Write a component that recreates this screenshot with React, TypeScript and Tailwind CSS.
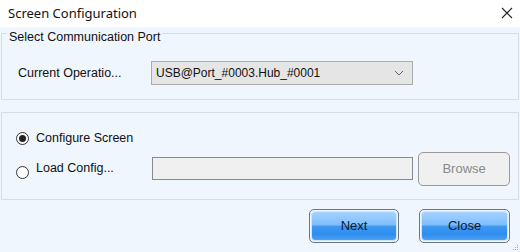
import React from "react";

function Radio({ checked }: { checked: boolean }) {
  return (
    <span className="flex h-[13px] w-[13px] items-center justify-center rounded-full border border-[#333] bg-white">
      {checked && <span className="h-[7px] w-[7px] rounded-full bg-[#222]" />}
    </span>
  );
}

function BlueButton({ label, w }: { label: string; w: string }) {
  return (
    <button className={`h-[34px] ${w} rounded-[5px] border border-[#6e7780] p-[1px]`}>
      <span className="flex h-full w-full items-center justify-center rounded-[4px] border border-[#cfe6ff] bg-[linear-gradient(to_bottom,#a6d3ff_0%,#7fbefc_45%,#3d97f2_52%,#2f8eef_80%,#4aa2f4_100%)] text-[13px] text-[#0a1a2a]">
        {label}
      </span>
    </button>
  );
}

export default function App() {
  return (
    <div
      className="relative flex h-[252px] w-[520px] flex-col overflow-hidden bg-[#eff6fd] text-[12px] text-[#111]"
      style={{ fontFamily: '"Liberation Sans", Arial, sans-serif' }}
    >
      {/* title bar */}
      <div className="flex h-[27px] shrink-0 items-center justify-between bg-white pl-[8px] pr-[7px]">
        <span className="text-[13px] text-[#111]" style={{ fontFamily: '"Noto Sans", "DejaVu Sans", sans-serif' }}>
          Screen Configuration
        </span>
        <svg width="12" height="12" viewBox="0 0 12 12" className="mt-[-2px]">
          <path d="M1 1L11 11M11 1L1 11" stroke="#222" strokeWidth="1.1" />
        </svg>
      </div>

      {/* group 1 */}
      <fieldset className="mx-[1px] mt-[-5px] h-[78px] border border-[#d5dce3] px-[15px]">
        <legend className="-ml-[10px] px-[2px] pt-[8px] text-[12.5px] leading-[14px] text-[#111]">
          Select Communication Port
        </legend>
        <div className="mt-[17px] flex items-center">
          <span className="w-[134px] pl-[1px] text-[12.5px]">Current Operatio...</span>
          <div className="flex h-[24px] w-[262px] items-center justify-between border border-[#adadad] bg-[#e5e5e5] pl-[4px] pr-[8px]">
            <span className="text-[12px]">USB@Port_#0003.Hub_#0001</span>
            <svg width="10" height="6" viewBox="0 0 10 6">
              <path d="M1 1L5 5L9 1" stroke="#666" strokeWidth="1" fill="none" />
            </svg>
          </div>
        </div>
      </fieldset>

      {/* group 2 */}
      <div className="mx-[1px] mt-[12px] flex h-[88px] flex-col border border-[#d5dce3] pl-[14px] pr-[8px]">
        <div className="mt-[16px] flex items-center gap-[7px]">
          <Radio checked />
          <span className="text-[12.5px]">Configure Screen</span>
        </div>
        <div className="mt-[4px] flex items-center">
          <div className="flex w-[136px] items-center gap-[7px]">
            <span className="mt-[8px]">
              <Radio checked={false} />
            </span>
            <span className="text-[12.5px]">Load Config...</span>
          </div>
          <div className="h-[23px] w-[262px] border border-[#8a8a8a] bg-[#f0f0f0]" />
          <button className="ml-[5px] h-[34px] w-[92px] rounded-[5px] border border-[#9a9a9a] bg-[#f0f0f0] text-[13px] text-[#8a8a8a]">
            Browse
          </button>
        </div>
      </div>

      {/* footer buttons */}
      <div className="mt-[9px] flex justify-end gap-[20px] pr-[10px]">
        <BlueButton label="Next" w="w-[90px]" />
        <BlueButton label="Close" w="w-[91px]" />
      </div>

      {/* resize grip */}
      <svg width="6" height="6" viewBox="0 0 6 6" className="absolute bottom-[1px] right-[1px]">
        <rect x="4" y="0" width="1" height="1" fill="#aaa" />
        <rect x="2" y="2" width="1" height="1" fill="#aaa" />
        <rect x="4" y="2" width="1" height="1" fill="#aaa" />
        <rect x="0" y="4" width="1" height="1" fill="#aaa" />
        <rect x="2" y="4" width="1" height="1" fill="#aaa" />
        <rect x="4" y="4" width="1" height="1" fill="#aaa" />
      </svg>
    </div>
  );
}
